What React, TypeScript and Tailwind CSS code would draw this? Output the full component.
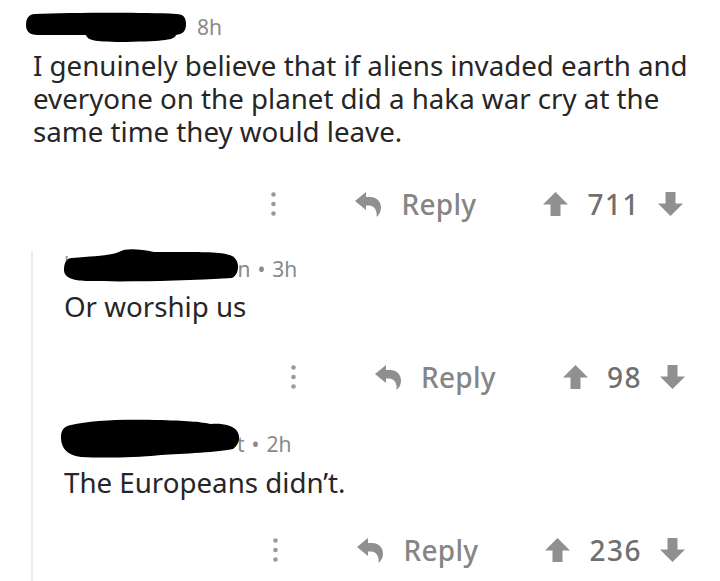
import React from "react";

const Dots = () => (
  <svg width="5" height="24" viewBox="0 0 5 24" className="shrink-0">
    <circle cx="2.5" cy="2.5" r="2.3" fill="#9a9a9a" />
    <circle cx="2.5" cy="12" r="2.3" fill="#9a9a9a" />
    <circle cx="2.5" cy="21.5" r="2.3" fill="#9a9a9a" />
  </svg>
);

const ReplyIcon = () => (
  <svg width="26" height="25" viewBox="0 0 26 25" className="shrink-0">
    <path
      d="M0 9 L11 0 L11 5 L15 5 C21.5 5 26 9.5 26 15.5 C26 19.5 24.5 22.5 21.5 25 C22.5 19 19.5 13.5 14 13.5 L11 13.5 L11 18 Z"
      fill="#8f8f8f"
    />
  </svg>
);

const UpArrow = () => (
  <svg width="25" height="24" viewBox="0 0 25 24" className="shrink-0">
    <path d="M12.5 0 L25 12.5 L17.5 12.5 L17.5 24 L7.5 24 L7.5 12.5 L0 12.5 Z" fill="#909090" />
  </svg>
);

const DownArrow = () => (
  <svg width="25" height="24" viewBox="0 0 25 24" className="shrink-0">
    <path d="M12.5 24 L25 11.5 L17.5 11.5 L17.5 0 L7.5 0 L7.5 11.5 L0 11.5 Z" fill="#909090" />
  </svg>
);

const ActionRow = ({ score, className }: { score: string; className: string }) => (
  <div className={`flex items-center justify-end pr-[37px] h-[30px] ${className}`}>
    <Dots />
    <div className="ml-[79px]">
      <ReplyIcon />
    </div>
    <span className="ml-[20px] text-[28px] leading-none font-medium text-[#858585] font-['Noto_Sans'] tracking-[0.3px]">
      Reply
    </span>
    <div className="ml-[67px]">
      <UpArrow />
    </div>
    <span className="ml-[19px] text-[28px] leading-none font-medium text-[#6f6f6f] font-['Noto_Sans'] tracking-[1.5px]">
      {score}
    </span>
    <div className="ml-[18px]">
      <DownArrow />
    </div>
  </div>
);

export default function App() {
  return (
    <div className="w-[720px] h-[581px] bg-white overflow-hidden flex flex-col font-['Noto_Sans',sans-serif] text-[#222]">
      {/* Comment 1 */}
      <div className="pl-[26px] pt-[12px]">
        <div className="flex items-center h-[30px]">
          <svg width="161" height="31" viewBox="0 0 161 31" className="shrink-0">
            <path
              d="M9 2 C40 1 110 0 150 2 C158 2 160 6 160 12 C160 20 156 22 150 23 C148 28 140 29 100 30 C70 30 62 29 60 23 L12 23 C3 23 0 19 0 13 C0 6 3 2 9 2 Z"
              fill="#000"
            />
          </svg>
          <span className="ml-[10px] text-[21px] leading-none text-[#8a8a8a]">8h</span>
        </div>
        <div className="pl-[7px] mt-[7px] text-[27.7px] leading-[33px] text-[#262626]">
          <p className="whitespace-nowrap">I genuinely believe that if aliens invaded earth and</p>
          <p className="whitespace-nowrap">everyone on the planet did a haka war cry at the</p>
          <p className="whitespace-nowrap">same time they would leave.</p>
        </div>
      </div>
      <ActionRow score="711" className="mt-[41px]" />

      {/* Nested */}
      <div className="mt-[32px] ml-[31px] border-l-2 border-[#eeeeee] flex-1 flex flex-col">
        <div className="pl-[31px]">
          <div className="flex items-center h-[33px] -mt-[3px]">
            <span className="text-[21px] leading-none text-[#9a9a9a]">l</span>
            <svg width="176" height="34" viewBox="0 0 176 34" className="shrink-0 -ml-[5px] relative z-10">
              <path
                d="M8 10 C30 8 45 8 55 4 C62 0 75 1 90 4 C130 4 160 3 168 8 C176 12 176 26 168 30 C120 33 60 34 25 33 C10 33 0 30 0 22 C0 14 3 10 8 10 Z"
                fill="#000"
              />
            </svg>
            <span className="-ml-[3px] text-[21px] leading-none text-[#8a8a8a] pt-[10px] flex items-center">
              <span>n</span>
              <span className="ml-[7px]">•</span>
              <span className="ml-[7px]">3h</span>
            </span>
          </div>
          <div className="mt-[9px] text-[27.7px] leading-[33px] text-[#262626]">Or worship us</div>
        </div>
        <ActionRow score="98" className="mt-[39px] -mr-[2px]" />

        <div className="pl-[28px] mt-[25px]">
          <div className="flex items-center h-[42px]">
            <svg width="179" height="42" viewBox="0 0 179 42" className="shrink-0 relative z-10">
              <path
                d="M10 8 C30 3 60 2 100 3 C130 4 140 5 150 7 C160 6 172 8 176 14 C180 20 178 28 172 32 C160 35 120 37 100 38 C70 41 40 41 20 40 C5 38 0 30 0 20 C0 12 4 9 10 8 Z"
                fill="#000"
              />
            </svg>
            <span className="-ml-[3px] text-[21px] leading-none text-[#8a8a8a] pt-[12px] flex items-center">
              <span>t</span>
              <span className="ml-[7px]">•</span>
              <span className="ml-[7px]">2h</span>
            </span>
          </div>
          <div className="pl-[3px] mt-[7px] text-[27.7px] leading-[33px] text-[#262626]">The Europeans didn’t.</div>
        </div>
        <ActionRow score="236" className="mt-[36px] -mr-[2px]" />
      </div>
    </div>
  );
}
